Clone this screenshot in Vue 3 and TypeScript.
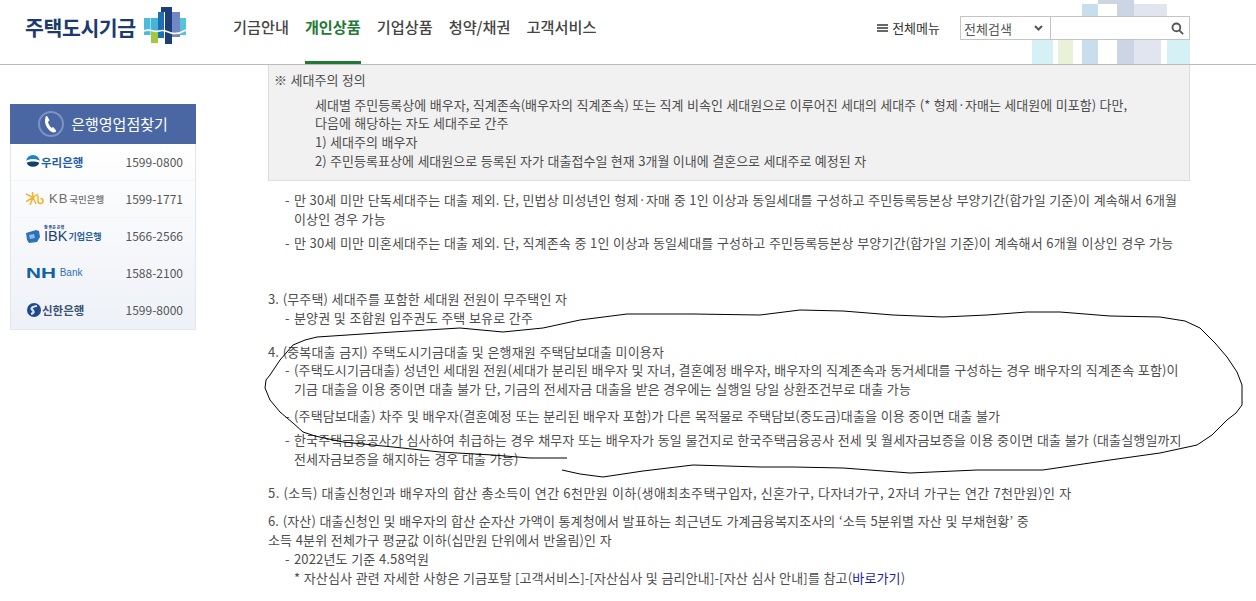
<script setup lang="ts">
const navItems = ['기금안내', '개인상품', '기업상품', '청약/채권', '고객서비스']

const banks = [
  { id: 'woori', phone: '1599-0800' },
  { id: 'kb', phone: '1599-1771' },
  { id: 'ibk', phone: '1566-2566' },
  { id: 'nh', phone: '1588-2100' },
  { id: 'shinhan', phone: '1599-8000' },
]

// decorative blocks behind the search box
const blocks = [
  [1032, 40, 21, 24, '#d5f1f6'],
  [1058, 40, 15, 24, '#e9f2d8'],
  [1082, 4, 16, 60, '#c9deed'],
  [1098, 0, 36, 4, '#ccd5e3'],
  [1117, 4, 17, 60, '#ccd5e3'],
  [1134, 4, 33, 36, '#e1e5f0'],
  [1134, 40, 27, 24, '#e1e5f0'],
  [1167, 40, 23, 24, '#d5f1f6'],
] as const

// pen mark drawn over the screenshot
const pen: [number, number][] = [
  [567, 458], [530, 458], [493, 455], [440, 452], [393, 447], [343, 442], [315, 436], [303, 432], [293, 423], [280, 412], [270, 400],
  [265, 388], [266, 380], [270, 375], [280, 360], [293, 345], [305, 340], [317, 337], [393, 332], [460, 328], [503, 332],
  [543, 328], [580, 320], [627, 314], [693, 314], [760, 315], [800, 310], [843, 311], [893, 315],
  [943, 317], [987, 315], [1027, 312], [1060, 312], [1110, 316], [1160, 317], [1185, 321], [1200, 328], [1215, 343], [1227, 357],
  [1237, 372], [1242, 385], [1242, 405], [1236, 413], [1227, 420], [1212, 435], [1197, 445], [1160, 453], [1110, 460], [1043, 470], [977, 470],
  [910, 473], [843, 468], [793, 467], [760, 467], [693, 465], [643, 471], [603, 477], [580, 474], [562, 470],
]
const penPath = pen.map((p, i) => `${i ? 'L' : 'M'}${p[0]} ${p[1]}`).join(' ')
</script>

<template>
  <div class="page">
    <svg class="decor" width="1256" height="65">
      <rect v-for="(b, i) in blocks" :key="i" :x="b[0]" :y="b[1]" :width="b[2]" :height="b[3]" :fill="b[4]" />
    </svg>

    <header class="top">
      <div class="logo">
        <span class="logo-text">주택도시기금</span>
        <svg width="42" height="38" viewBox="0 0 42 38">
          <rect x="0" y="11" width="6.500" height="17" fill="#4dbcdc" />
          <rect x="7" y="11" width="7" height="14" fill="#45b4d8" />
          <rect x="7" y="25" width="7" height="11" fill="#a2c83c" />
          <rect x="14" y="5" width="6" height="26" fill="#1f6fb4" />
          <rect x="17" y="0" width="11" height="5" fill="#1c3f7c" />
          <rect x="21" y="0" width="7" height="37" fill="#1c3f7c" />
          <rect x="28" y="5" width="8" height="25" fill="#7387c4" />
          <rect x="36" y="11" width="6" height="17" fill="#55c3dd" />
          <path d="M0 24c6-3 10 2 15 0s8 1 12 2 10 0 15-3" fill="none" stroke="#fff" stroke-width="1.600" />
        </svg>
      </div>
      <nav class="nav">
        <a v-for="(item, i) in navItems" :key="item" :class="{ on: i === 1 }">{{ item }}</a>
      </nav>
      <div class="tools">
        <span class="all-menu">
          <i class="burger" />
          전체메뉴
        </span>
        <div class="search">
          <div class="scope-wrap">
            <select class="scope">
              <option>전체검색</option>
            </select>
            <svg class="chev" width="9" height="6" viewBox="0 0 9 6" fill="none" stroke="#555" stroke-width="2">
              <path d="M1 1l3.500 3.500L8 1" />
            </svg>
          </div>
          <div class="query">
            <svg width="13" height="13" viewBox="0 0 14 14" fill="none" stroke="#555" stroke-width="2">
              <circle cx="5.800" cy="5.800" r="4.200" />
              <path d="M9 9l4 4" />
            </svg>
          </div>
        </div>
      </div>
    </header>

    <div class="body">
      <aside class="side">
        <div class="side-head">
          <span class="phone">
            <svg width="16" height="18" viewBox="0 0 16 18">
              <path fill="#fff" d="M4.200 1.200 6.300 4.800c.3.5.2 1-.3 1.300l-1 .7c.4 2.300 1.700 4.600 3.400 6l1.200-.5c.5-.2 1 0 1.300.4l2.100 2.800c.3.4.2.9-.2 1.200-1.200.8-2.800 1-4 .4C5.300 15.200 2.400 11 2 6.500 1.900 4.700 2.300 2.600 3 1.300c.3-.5.900-.5 1.200-.1z" />
            </svg>
          </span>
          은행영업점찾기
        </div>
        <ul class="banks">
          <li v-for="b in banks" :key="b.id">
            <span v-if="b.id === 'woori'" class="bank woori">
              <svg width="14" height="13" viewBox="0 0 14 13">
                <path fill="#1d84c8" d="M0.300 5.800a6.700 5.800 0 0 1 13.400 0c-2-1.300-4.300-1.800-6.700-1.800s-4.700.5-6.700 1.800z" />
                <path fill="#123f72" d="M0.600 7.800c1.900-1 4.100-1.400 6.400-1.400s4.500.4 6.400 1.400A6.700 5.500 0 0 1 .6 7.800z" />
              </svg>
              우리은행
            </span>
            <span v-else-if="b.id === 'kb'" class="bank kb">
              <svg width="20" height="13" viewBox="0 0 20 13" fill="none" stroke="#f4b32c" stroke-width="1.500">
                <path d="M6.500 0l.5 5M0 2l7 3.500M0 9.500L7 5.500M4 13l3-7.500 3 6.500M7 5.500 12 2" />
                <path d="M12 3.500v5.500a2.500 2.500 0 1 0 2.500-2.500" />
              </svg>
              <b>KB</b>
              <span>국민은행</span>
            </span>
            <span v-else-if="b.id === 'ibk'" class="bank ibk">
              <svg width="14" height="13" viewBox="0 0 14 13">
                <path fill="#2c72b8" d="M0 3l10-3 3 1 1 6-3 5-8 1-2-3z" />
                <path fill="#8fbde6" d="M3 5l5-1 1 4-5 1z" />
              </svg>
              <span class="ibk-tag">참 좋은 은행</span>
              <b>IBK</b>
              <span>기업은행</span>
            </span>
            <span v-else-if="b.id === 'nh'" class="bank nh"><b>NH</b>Bank</span>
            <span v-else class="bank shinhan">
              <svg width="14" height="14" viewBox="0 0 14 14">
                <circle cx="7" cy="7" r="7" fill="#1e4a8c" />
                <path d="M4 11c4-1 2.500-3.500 1-4.500S6 3 10 3" stroke="#d8e4f2" stroke-width="2.200" fill="none" />
              </svg>
              신한은행
            </span>
            <span class="tel">{{ b.phone }}</span>
          </li>
        </ul>
      </aside>

      <main class="content">
        <section class="note">
          <p class="note-title">※ 세대주의 정의</p>
          <p class="note-body">
            세대별 주민등록상에 배우자, 직계존속(배우자의 직계존속) 또는 직계 비속인 세대원으로 이루어진 세대의 세대주 (* 형제·자매는 세대원에 미포함) 다만,<br />
            다음에 해당하는 자도 세대주로 간주<br />
            1) 세대주의 배우자<br />
            2) 주민등록표상에 세대원으로 등록된 자가 대출접수일 현재 3개월 이내에 결혼으로 세대주로 예정된 자
          </p>
        </section>

        <ul class="dash first">
          <li>만 30세 미만 단독세대주는 대출 제외. 단, 민법상 미성년인 형제·자매 중 1인 이상과 동일세대를 구성하고 주민등록등본상 부양기간(합가일 기준)이 계속해서 6개월<br />이상인 경우 가능</li>
          <li>만 30세 미만 미혼세대주는 대출 제외. 단, 직계존속 중 1인 이상과 동일세대를 구성하고 주민등록등본상 부양기간(합가일 기준)이 계속해서 6개월 이상인 경우 가능</li>
        </ul>

        <p class="item three">3. (무주택) 세대주를 포함한 세대원 전원이 무주택인 자</p>
        <ul class="dash tight">
          <li>분양권 및 조합원 입주권도 주택 보유로 간주</li>
        </ul>

        <p class="item four">4. (중복대출 금지) 주택도시기금대출 및 은행재원 주택담보대출 미이용자</p>
        <ul class="dash tight">
          <li>(주택도시기금대출) 성년인 세대원 전원(세대가 분리된 배우자 및 자녀, 결혼예정 배우자, 배우자의 직계존속과 동거세대를 구성하는 경우 배우자의 직계존속 포함)이<br />기금 대출을 이용 중이면 대출 불가 단, 기금의 전세자금 대출을 받은 경우에는 실행일 당일 상환조건부로 대출 가능</li>
          <li>(주택담보대출) 차주 및 배우자(결혼예정 또는 분리된 배우자 포함)가 다른 목적물로 주택담보(중도금)대출을 이용 중이면 대출 불가</li>
          <li>한국주택금융공사가 심사하여 취급하는 경우 채무자 또는 배우자가 동일 물건지로 한국주택금융공사 전세 및 월세자금보증을 이용 중이면 대출 불가 (대출실행일까지<br />전세자금보증을 해지하는 경우 대출 가능)</li>
        </ul>

        <p class="item five">5. (소득) 대출신청인과 배우자의 합산 총소득이 연간 6천만원 이하(생애최초주택구입자, 신혼가구, 다자녀가구, 2자녀 가구는 연간 7천만원)인 자</p>

        <p class="item six">6. (자산) 대출신청인 및 배우자의 합산 순자산 가액이 통계청에서 발표하는 최근년도 가계금융복지조사의 ‘소득 5분위별 자산 및 부채현황’ 중<br />소득 4분위 전체가구 평균값 이하(십만원 단위에서 반올림)인 자</p>
        <ul class="dash tight">
          <li>2022년도 기준 4.58억원<br />* 자산심사 관련 자세한 사항은 기금포탈 [고객서비스]-[자산심사 및 금리안내]-[자산 심사 안내]를 참고(<a class="link">바로가기</a>)</li>
        </ul>
      </main>
    </div>

    <svg class="pen" width="1256" height="601">
      <path :d="penPath" fill="none" stroke="#000" stroke-width="1" stroke-linejoin="round" />
    </svg>
  </div>
</template>

<style>
html,
body {
  margin: 0;
  background: #fff;
  overflow: hidden;
}
</style>

<style scoped>
.page {
  position: relative;
  width: 1256px;
  height: 601px;
  overflow: hidden;
  font-family: 'Noto Sans CJK KR', 'Noto Sans', sans-serif;
  color: #4d4d4d;
  font-size: 13px;
  word-spacing: 0.45px;
  line-height: 18.7px;
}

.decor {
  position: absolute;
  left: 0;
  top: 0;
}

.pen {
  position: absolute;
  left: 0;
  top: 0;
  pointer-events: none;
}

/* Header */
.top {
  position: relative;
  display: flex;
  align-items: flex-start;
  height: 64px;
  padding: 0 66px 0 25px;
  border-bottom: 1px solid #bbb;
  box-sizing: content-box;
}

.logo {
  display: flex;
  align-items: flex-start;
  gap: 8px;
  width: 208px;
  padding-top: 7px;
}

.logo-text {
  font-size: 20.5px;
  font-weight: 700;
  line-height: 40px;
  color: #1c3a6e;
  white-space: nowrap;
  letter-spacing: -0.4px;
}

.nav {
  display: flex;
  gap: 16px;
  align-self: stretch;
}

.nav a {
  display: block;
  font-size: 15.2px;
  font-weight: 500;
  line-height: 53px;
  color: #444;
  white-space: nowrap;
  word-spacing: 0;
}

.nav a.on {
  color: #1f7a35;
  font-weight: 700;
  box-shadow: inset 0 -3px 0 #1f7a35;
}

.tools {
  display: flex;
  align-items: center;
  margin-left: auto;
  gap: 20px;
  height: 56px;
}

.all-menu {
  display: flex;
  align-items: center;
  gap: 4px;
  font-size: 13px;
  color: #333;
}

.burger {
  display: block;
  box-sizing: content-box;
  width: 11px;
  height: 2px;
  padding: 1px 0;
  border-top: 2px solid #666;
  border-bottom: 2px solid #666;
  background: #666;
  background-clip: content-box;
}

.search {
  display: flex;
  height: 24px;
}

.scope-wrap {
  position: relative;
  width: 91px;
  height: 24px;
}

.scope {
  display: block;
  width: 91px;
  height: 24px;
  padding: 0 0 0 3px;
  border: 1px solid #c4c4c4;
  border-radius: 0;
  background: #fff;
  color: #555;
  font: 13px 'Noto Sans CJK KR', sans-serif;
  appearance: none;
}

.chev {
  position: absolute;
  right: 8px;
  top: 9px;
}

.query {
  display: flex;
  align-items: center;
  justify-content: flex-end;
  box-sizing: border-box;
  width: 139px;
  height: 24px;
  padding-right: 5px;
  background: #fff;
  border: 1px solid #c4c4c4;
  border-left: 0;
}

/* Body */
.body {
  display: flex;
  align-items: flex-start;
}

/* Sidebar */
.side {
  flex: none;
  width: 186px;
  margin: 39px 72px 0 10px;
}

.side-head {
  display: flex;
  align-items: center;
  justify-content: center;
  gap: 7px;
  height: 40px;
  background: #4a67a3;
  color: #fff;
  font-size: 15px;
}

.phone {
  display: flex;
  align-items: center;
  justify-content: center;
  box-sizing: border-box;
  width: 26px;
  height: 26px;
  border: 2px solid #7d93c2;
  border-radius: 50%;
}

.banks {
  list-style: none;
  margin: 0;
  padding: 0;
  border: 1px solid #e2e6ee;
  border-top: 0;
  background: linear-gradient(#fff, #eef1f7);
}

.banks li {
  display: flex;
  align-items: center;
  justify-content: space-between;
  height: 37px;
  padding: 0 12px 0 15px;
  border-bottom: 1px solid #f3f5f9;
  box-sizing: border-box;
}

.banks li:last-child {
  border-bottom: 0;
}

.tel {
  font-size: 12px;
  color: #555;
  word-spacing: 0;
}

.bank {
  position: relative;
  display: flex;
  align-items: center;
  gap: 1px;
  font-weight: 700;
  font-size: 11.5px;
  white-space: nowrap;
  word-spacing: 0;
}

.woori {
  color: #1f5fa4;
}

.kb {
  color: #6d6d6d;
  font-weight: 500;
  font-size: 9.5px;
}

.kb b {
  font-size: 13px;
  font-weight: 400;
  letter-spacing: 1px;
  margin-left: 2px;
  font-family: 'Liberation Sans', sans-serif;
}

.ibk {
  color: #2a5f9e;
  font-size: 9px;
  line-height: 11px;
}

.ibk b {
  font-size: 14.5px;
  font-weight: 500;
  color: #1c3f7c;
  margin-left: 3px;
  font-family: 'Liberation Sans', sans-serif;
}

.ibk-tag {
  position: absolute;
  left: 18px;
  top: -5px;
  font-size: 4px;
  line-height: 4px;
  color: #1c3f7c;
}

.nh {
  color: #2c72b8;
  font-size: 10px;
  font-weight: 400;
  font-family: 'Liberation Sans', sans-serif;
}

.nh b {
  display: inline-block;
  font-size: 15px;
  font-weight: 700;
  color: #0f62a8;
  transform: scaleX(1.38);
  transform-origin: left;
  margin-right: 11px;
}

.shinhan {
  color: #3a5376;
  font-size: 11.5px;
  margin-left: 1px;
}

/* Content */
.content {
  flex: none;
  width: 922px;
  letter-spacing: 0.15px;
}

.note {
  height: 116px;
  box-sizing: border-box;
  padding: 6px 5px 0;
  background: #f1f1f1;
  border: 1px solid #ddd;
  border-top: 0;
  letter-spacing: 0.03px;
}

.note p {
  margin: 0;
}

.note-body {
  margin-top: 6px !important;
  padding-left: 41px;
}

.dash {
  list-style: none;
  margin: 0;
  padding: 0;
}

.dash li {
  position: relative;
  padding-left: 26px;
  margin-bottom: 6px;
}

.dash li::before {
  content: '-';
  position: absolute;
  left: 17px;
}

.dash.first {
  margin-top: 10px;
}

.dash.tight li:first-child {
  margin-bottom: 8px;
}

.dash.tight li:last-child {
  margin-bottom: 0;
}

.item {
  margin: 0;
}

.three {
  margin-top: 37px;
}

.four {
  margin-top: 15px;
}

.five {
  margin-top: 15px;
  letter-spacing: 0.42px;
}

.six {
  margin-top: 10px;
}

.link {
  color: #1a1aa8;
}
</style>
